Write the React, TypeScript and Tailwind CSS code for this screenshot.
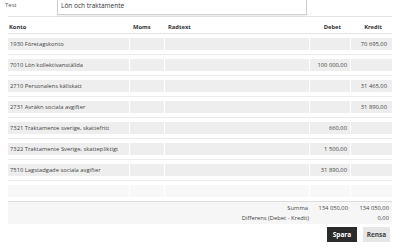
import React from "react";

const rows: { konto: string; debet: string; kredit: string }[] = [
  { konto: "1930 Företagskonto", debet: "", kredit: "70 695,00" },
  { konto: "7010 Lön kollektivanställda", debet: "100 000,00", kredit: "" },
  { konto: "2710 Personalens källskatt", debet: "", kredit: "31 465,00" },
  { konto: "2731 Avräkn sociala avgifter", debet: "", kredit: "31 890,00" },
  { konto: "7321 Traktamente sverige, skattefritt", debet: "660,00", kredit: "" },
  { konto: "7322 Traktamente Sverige, skattepliktigt", debet: "1 500,00", kredit: "" },
  { konto: "7510 Lagstadgade sociala avgifter", debet: "31 890,00", kredit: "" },
];

const grid = "grid grid-cols-[121px_34px_144px_40px_41px] gap-x-[1px]";

export default function App() {
  return (
    <div
      className="w-[400px] h-[250px] overflow-hidden bg-white text-[#444]"
      style={{ fontFamily: '"Open Sans", "Noto Sans", sans-serif' }}
    >
      {/* Test field */}
      <div className="flex items-start -mt-[4px] h-[19px]">
        <div className="w-[57px] pl-[5px] pt-[5px] text-[6px] leading-[8px] text-[#555]">Test</div>
        <div className="w-[250px] h-[19px] border border-[#cfcfcf] shadow-[0_1px_1px_rgba(0,0,0,0.06)] pl-[3px] pt-[4px] text-[6.5px] leading-[9px] text-[#333]">
          Lön och traktamente
        </div>
      </div>

      <div className="mx-[8px] mt-[1px]">
        {/* header */}
        <div className={`${grid} border-t border-b border-[#e2e2e2] pt-[6px] pb-[2px] text-[5.8px] leading-[8px] font-bold text-[#333]`}>
          <div className="pl-[1px]">Konto</div>
          <div className="pl-[3px]">Moms</div>
          <div className="pl-[3px]">Radtext</div>
          <div className="text-right pr-[9px]">Debet</div>
          <div className="text-right pr-[10px]">Kredit</div>
        </div>

        {rows.map((r, i) => (
          <div key={i} className={`${grid} border-b border-[#ececec] py-[4px] text-[5.8px] leading-[12px]`}>
            <div className="h-[12px] bg-[#eeeeee] pl-[2px] whitespace-nowrap overflow-hidden">{r.konto}</div>
            <div className="h-[12px] bg-[#eeeeee]" />
            <div className="h-[12px] bg-[#eeeeee]" />
            <div className="h-[12px] bg-[#eeeeee] text-right pr-[3px] whitespace-nowrap">{r.debet}</div>
            <div className="h-[12px] bg-[#eeeeee] text-right pr-[5px] whitespace-nowrap">{r.kredit}</div>
          </div>
        ))}

        <div className={`${grid} border-b border-[#dcdcdc] py-[4px]`}>
          <div className="h-[12px] bg-[#f8f8f8]" />
          <div className="h-[12px] bg-[#f8f8f8]" />
          <div className="h-[12px] bg-[#f8f8f8]" />
          <div className="h-[12px] bg-[#f8f8f8]" />
          <div className="h-[12px] bg-[#f8f8f8]" />
        </div>

        {/* footer */}
        <div className="bg-[#f6f6f6] pt-[1px] pb-[1px] text-[5.8px] leading-[10px]">
          <div className={grid}>
            <div />
            <div />
            <div className="text-right pr-[1px]">Summa</div>
            <div className="text-right pr-[2px]">134 050,00</div>
            <div className="text-right pr-[3px]">134 050,00</div>
          </div>
          <div className={grid}>
            <div />
            <div className="col-span-2 text-right">Differens (Debet - Kredit)</div>
            <div />
            <div className="text-right pr-[3px]">0,00</div>
          </div>
        </div>

        <div className="flex justify-end gap-[6px] mt-[3px] pr-[2px]">
          <div className="w-[30px] h-[15px] bg-[#2b2b2b] text-white font-bold text-[6.5px] flex items-center justify-center">Spara</div>
          <div className="w-[27px] h-[15px] bg-[#e6e6e6] text-[#444] font-bold text-[6.5px] flex items-center justify-center">Rensa</div>
        </div>
      </div>
    </div>
  );
}
